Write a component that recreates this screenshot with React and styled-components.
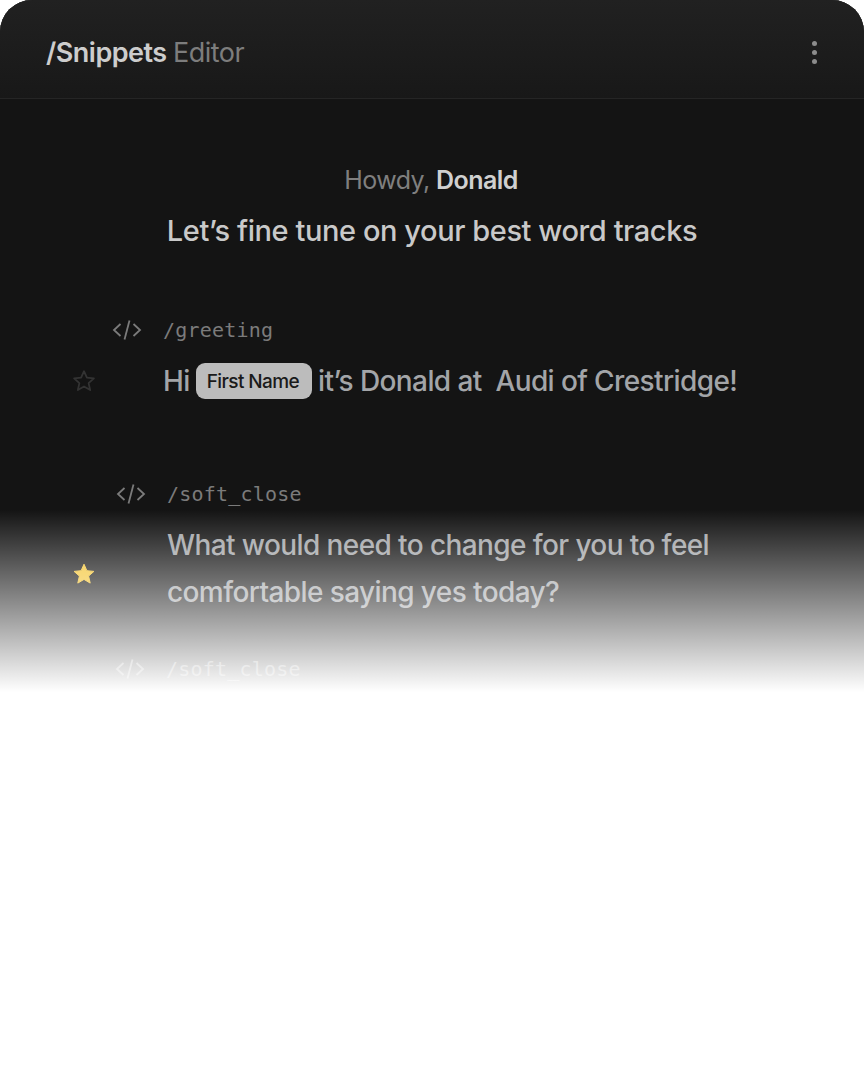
import React from "react";
import styled, { createGlobalStyle } from "styled-components";

const Global = createGlobalStyle`
  html, body { margin: 0; padding: 0; background: #fff; }
  body { font-family: Inter, "Liberation Sans", sans-serif; }
`;

const Page = styled.div`
  width: 864px;
  height: 1070px;
  background: #fff;
  overflow: hidden;
`;

const Card = styled.main`
  position: relative;
  width: 864px;
  height: 700px;
  overflow: hidden;
  border-radius: 32px 32px 0 0;
  background: #141414;
  box-shadow: inset 0 1px 0 #3a3a3a;
`;

const Header = styled.header`
  height: 99px;
  box-sizing: border-box;
  padding: 7px 47px 0 46px;
  display: flex;
  align-items: center;
  justify-content: space-between;
  border-bottom: 1px solid #252525;
  background: linear-gradient(180deg, #212121 0%, #181818 100%);
`;

const Title = styled.h1`
  margin: 0;
  font-size: 27px;
  line-height: 32px;
  font-weight: 600;
  letter-spacing: -0.5px;
  color: #cdcdcd;
`;

const TitleSoft = styled.span`
  font-weight: 400;
  color: #7d7d7d;
`;

const MenuDots = styled.div`
  display: flex;
  flex-direction: column;
  gap: 4.300px;
`;

const Dot = styled.span`
  width: 5px;
  height: 5px;
  border-radius: 50%;
  background: #8c8c8c;
`;

const Greeting = styled.section`
  padding-top: 64px;
  display: flex;
  flex-direction: column;
  align-items: center;
`;

const Howdy = styled.p`
  margin: 0 2px 0 0;
  font-size: 25px;
  line-height: 34px;
  letter-spacing: -0.55px;
  color: #7f7f7f;
`;

const Name = styled.b`
  font-weight: 600;
  color: #d0d0d0;
`;

const Lead = styled.p`
  margin: 14px 0 0;
  font-size: 29px;
  line-height: 40px;
  font-weight: 500;
  letter-spacing: -0.42px;
  color: #c9c9c9;
`;

const Snippet = styled.article`
  display: grid;
  grid-template-columns: ${(p) => p.$iconCol}px 1fr;
  margin-top: ${(p) => p.$top}px;
  padding-left: 72px;
`;

const CodeLabel = styled.div`
  grid-column: 1 / 3;
  display: flex;
  align-items: center;
  gap: 21px;
  padding-left: ${(p) => p.$indent}px;
  font-family: "DejaVu Sans Mono", "Liberation Mono", monospace;
  font-size: 20px;
  line-height: 30px;
  letter-spacing: 0.2px;
  color: #7b7b7b;
`;

const Body = styled.div`
  margin-top: ${(p) => p.$top}px;
  font-size: 28px;
  line-height: 47px;
  font-weight: 500;
  letter-spacing: -0.6px;
  color: #a3a5a8;
  white-space: nowrap;
`;

const StarCell = styled.div`
  display: flex;
  align-items: center;
  margin-top: ${(p) => p.$top}px;
`;

const Chip = styled.span`
  display: inline-flex;
  align-items: center;
  height: 36px;
  padding: 0 13px 0 11px;
  margin: 0 6px 0 6px;
  border-radius: 9px;
  background: #bcbcbc;
  color: #1a1a1a;
  font-size: 19px;
  font-weight: 500;
  letter-spacing: -0.6px;
  vertical-align: middle;
  position: relative;
  top: -2px;
`;

const Fade = styled.div`
  position: absolute;
  left: 0;
  right: 0;
  top: 510px;
  height: 182px;
  background: linear-gradient(180deg, rgba(255,255,255,0) 0%, rgba(255,255,255,0.5) 50%, rgba(255,255,255,0.9) 90%, #fff 100%);
  pointer-events: none;
`;

const Tail = styled.div`
  position: absolute;
  left: 0;
  right: 0;
  top: 692px;
  bottom: 0;
  background: #fff;
`;

const CodeIcon = () => (
  <svg width="30" height="22" viewBox="0 0 30 22" fill="none" stroke="currentColor" strokeWidth="1.8">
    <path d="M8.5 5 2 11l6.500 6" />
    <path d="M21.500 5 28 11l-6.500 6" />
    <path d="M17.500 1.500 12.500 20.500" />
  </svg>
);

const Star = ({ filled }) => (
  <svg width="24" height="24" viewBox="0 0 24 24" fill={filled ? "#f4c431" : "none"} stroke={filled ? "#f4c431" : "#333333"} strokeWidth={filled ? 1 : 1.8} strokeLinejoin="round">
    <path d="M12 2.200l2.900 6.500 7 .7-5.300 4.700 1.600 7-6.200-3.700-6.200 3.700 1.600-7L2.100 9.400l7-.7z" />
  </svg>
);

export default function App() {
  return (
    <Page>
      <Global />
      <Card>
        <Header>
          <Title>/Snippets <TitleSoft>Editor</TitleSoft></Title>
          <MenuDots><Dot /><Dot /><Dot /></MenuDots>
        </Header>
        <Greeting>
          <Howdy>Howdy, <Name>Donald</Name></Howdy>
          <Lead>Let’s fine tune on your best word tracks</Lead>
        </Greeting>
        <Snippet $iconCol={91} $top={64}>
          <CodeLabel $indent={40}><CodeIcon />/greeting</CodeLabel>
          <StarCell $top={11}><Star /></StarCell>
          <Body $top={13}>Hi<Chip>First Name</Chip>it’s Donald at&nbsp; Audi of Crestridge!</Body>
        </Snippet>
        <Snippet $iconCol={95} $top={74}>
          <CodeLabel $indent={44}><CodeIcon />/soft_close</CodeLabel>
          <StarCell $top={22}><Star filled /></StarCell>
          <Body $top={13}>What would need to change for you to feel<br />comfortable saying yes today?</Body>
        </Snippet>
        <Snippet $iconCol={95} $top={38}>
          <CodeLabel $indent={43}><CodeIcon />/soft_close</CodeLabel>
        </Snippet>
        <Fade />
        <Tail />
      </Card>
    </Page>
  );
}
